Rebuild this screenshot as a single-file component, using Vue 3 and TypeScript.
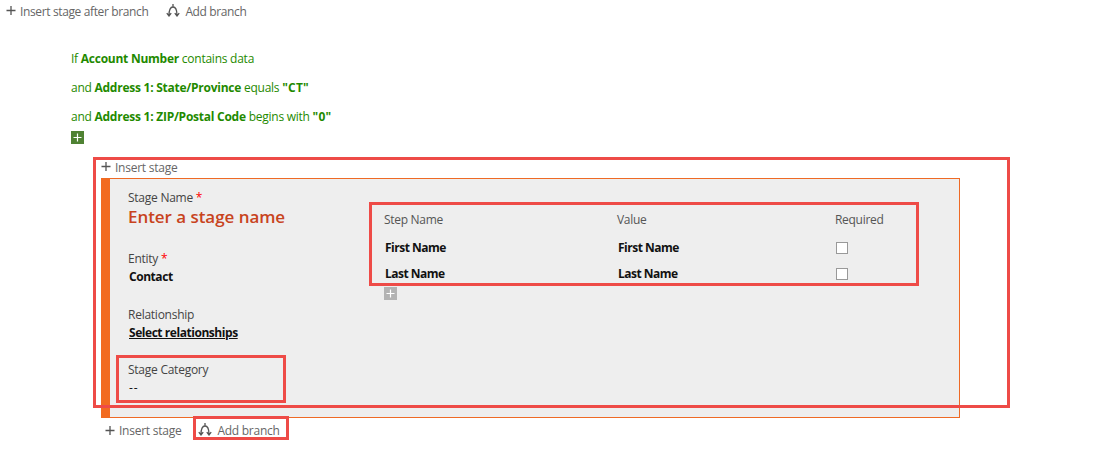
<template>
  <div class="page">
    <div class="toolbar">
      <a class="action">
        <svg class="plus" viewBox="0 0 14 14"><path d="M0.5 6.5h9M5 2v9" /></svg>
        Insert stage after branch
      </a>
      <a class="action branch-action">
        <svg class="branch-icon" viewBox="0 0 14 13"><path d="M7 0v3M7 3C4.4 3 3 5.8 3 11.5M7 3c2.6 0 4 2.8 4 8.5M0.8 9.2 3 12l2.2-2.8M8.8 9.2 11 12l2.2-2.8" /></svg>
        Add branch
      </a>
    </div>

    <div class="conditions">
      <p v-for="(line, i) in conditions" :key="i">
        {{ line.prefix }} <b>{{ line.field }}</b> {{ line.op }} <b v-if="line.value" class="literal">{{ line.value }}</b>
      </p>
      <span class="add-box green">
        <svg viewBox="0 0 13 13"><path d="M2.5 6.5h8M6.5 2.5v8" /></svg>
      </span>
    </div>

    <div class="stage-wrap">
      <a class="action insert-top">
        <svg class="plus" viewBox="0 0 14 14"><path d="M0.5 6.5h9M5 2v9" /></svg>
        Insert stage
      </a>

      <section class="stage">
        <div class="stage-left">
          <div class="label">Stage Name <i>*</i></div>
          <div class="stage-name">Enter a stage name</div>
          <div class="label entity-label">Entity <i>*</i></div>
          <div class="value">Contact</div>
          <div class="label rel-label">Relationship</div>
          <div class="value link">Select relationships</div>
          <div class="label cat-label">Stage Category</div>
          <div class="value dash">--</div>
        </div>

        <div class="steps">
          <div class="steps-row head">
            <span>Step Name</span>
            <span>Value</span>
            <span>Required</span>
          </div>
          <div v-for="step in steps" :key="step" class="steps-row">
            <b>{{ step }}</b>
            <b>{{ step }}</b>
            <span class="check"></span>
          </div>
          <span class="add-box grey">
            <svg viewBox="0 0 13 13"><path d="M2.5 6.5h8M6.5 2.5v8" /></svg>
          </span>
        </div>
      </section>

      <div class="stage-foot">
        <a class="action">
          <svg class="plus" viewBox="0 0 14 14"><path d="M0.5 6.5h9M5 2v9" /></svg>
          Insert stage
        </a>
        <a class="action foot-branch">
          <svg class="branch-icon" viewBox="0 0 14 13"><path d="M7 0v3M7 3C4.4 3 3 5.8 3 11.5M7 3c2.6 0 4 2.8 4 8.5M0.8 9.2 3 12l2.2-2.8M8.8 9.2 11 12l2.2-2.8" /></svg>
          Add branch
        </a>
      </div>

      <!-- annotation boxes drawn over the screenshot -->
      <div class="mark mark-stage"></div>
      <div class="mark mark-steps"></div>
      <div class="mark mark-category"></div>
      <div class="mark mark-branch"></div>
    </div>
  </div>
</template>

<script setup lang="ts">
interface Condition {
  prefix: string
  field: string
  op: string
  value?: string
}

const conditions: Condition[] = [
  { prefix: 'If', field: 'Account Number', op: 'contains data' },
  { prefix: 'and', field: 'Address 1: State/Province', op: 'equals', value: '"CT"' },
  { prefix: 'and', field: 'Address 1: ZIP/Postal Code', op: 'begins with', value: '"0"' }
]

const steps = ['First Name', 'Last Name']
</script>

<style>
html,
body {
  margin: 0;
  background: #fff;
}
</style>

<style scoped>
.page {
  width: 1095px;
  height: 451px;
  overflow: hidden;
  font-family: "Open Sans", "Noto Sans", sans-serif;
  font-size: 12px;
  letter-spacing: -0.25px;
  color: #444;
}

.toolbar {
  display: flex;
  gap: 18px;
  padding: 1px 0 0 6px;
  height: 20px;
  line-height: 17px;
  letter-spacing: -0.37px;
}

.action {
  display: inline-flex;
  align-items: center;
  color: #666;
  white-space: nowrap;
}

.plus {
  width: 14px;
  height: 14px;
  fill: none;
  stroke: #555;
  stroke-width: 1.3;
}

.branch-icon {
  width: 14px;
  height: 13px;
  margin-right: 5px;
  margin-top: -2px;
  fill: none;
  stroke: #555;
  stroke-width: 1.3;
}

.conditions {
  margin-top: 29px;
  padding-left: 71px;
  color: #1f8a00;
}

.conditions p {
  margin: 0 0 12px;
  height: 17px;
  line-height: 17px;
}

.conditions b,
.steps b,
.value {
  font-weight: 700;
}

.literal {
  letter-spacing: 0.2px;
}

.add-box {
  display: block;
  width: 13px;
  height: 13px;
}

.add-box svg {
  display: block;
  fill: none;
  stroke: #fff;
  stroke-width: 1.2;
}

.green {
  margin-top: -6px;
  background: #4f8233;
}

.grey {
  background: #b3b3b3;
}

.stage-wrap {
  position: relative;
  margin-top: 15px;
  padding-left: 101px;
}

.insert-top {
  box-sizing: border-box;
  height: 18px;
  padding-bottom: 2px;
}

.stage {
  display: flex;
  box-sizing: border-box;
  width: 859px;
  height: 240px;
  background: #eee;
  border: 1px solid #ee6a25;
  border-left: 9px solid #f26b21;
}

.stage-left {
  width: 250px;
  padding: 11px 0 0 18px;
  line-height: 16px;
}

.label i {
  color: #f00;
  font-style: normal;
}

.stage-name {
  height: 24px;
  color: #c8431d;
  font-size: 17px;
  line-height: 22px;
  font-weight: 600;
  letter-spacing: -0.05px;
}

.entity-label {
  margin-top: 21px;
}

.value {
  margin-top: 2px;
  margin-left: 1px;
  color: #111;
  letter-spacing: -0.45px;
}

.rel-label {
  margin-top: 22px;
}

.link {
  text-decoration: underline;
}

.cat-label {
  margin-top: 21px;
}

.dash {
  font-weight: 400;
  letter-spacing: 1px;
}

.steps {
  margin-left: 6px;
  padding-top: 33px;
  width: 500px;
}

.steps-row {
  display: grid;
  grid-template-columns: 233px 218px 1fr;
  height: 26px;
  line-height: 26px;
  padding-left: 1px;
  color: #111;
  align-items: center;
  letter-spacing: -0.5px;
}

.steps-row.head {
  height: 16px;
  line-height: 16px;
  margin-bottom: 7px;
  margin-left: -1px;
  color: #555;
  letter-spacing: -0.3px;
}

.check {
  box-sizing: border-box;
  width: 12px;
  height: 12px;
  background: #fff;
  border: 1px solid #999;
}

.stage-foot {
  display: flex;
  gap: 17px;
  padding: 4px 0 0 4px;
  line-height: 17px;
}

.mark {
  position: absolute;
  box-sizing: border-box;
  border: 3px solid #ee4b47;
  pointer-events: none;
}

.mark-stage {
  left: 93px;
  top: -2px;
  width: 917px;
  height: 251px;
}

.mark-steps {
  left: 369px;
  top: 43px;
  width: 550px;
  height: 84px;
}

.mark-category {
  left: 116px;
  top: 196px;
  width: 170px;
  height: 48px;
}

.mark-branch {
  left: 193px;
  top: 257px;
  width: 96px;
  height: 24px;
}
</style>
